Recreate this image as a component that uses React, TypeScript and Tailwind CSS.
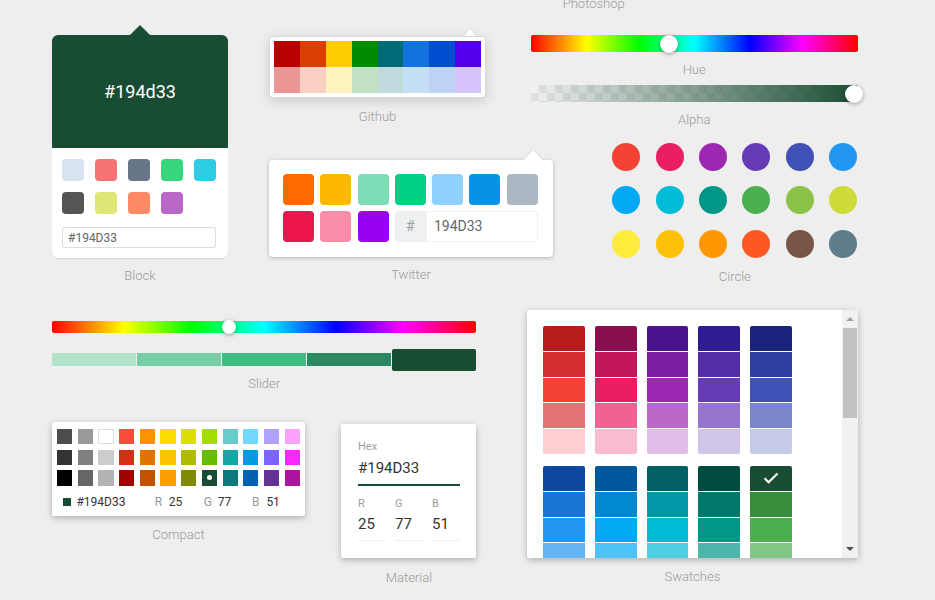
import React from "react";

const blockColors = ["#D9E3F0", "#F47373", "#697689", "#37D67A", "#2CCCE4", "#555555", "#dce775", "#ff8a65", "#ba68c8"];
const githubColors = [
  "#B80000", "#DB3E00", "#FCCB00", "#008B02", "#006B76", "#1273DE", "#004DCF", "#5300EB",
  "#EB9694", "#FAD0C3", "#FEF3BD", "#C1E1C5", "#BEDADC", "#C4DEF6", "#BED3F3", "#D4C4FB",
];
const twitterTop = ["#FF6900", "#FCB900", "#7BDCB5", "#00D084", "#8ED1FC", "#0693E3", "#ABB8C3"];
const twitterBottom = ["#EB144C", "#F78DA7", "#9900EF"];
const circleColors = [
  "#f44336", "#e91e63", "#9c27b0", "#673ab7", "#3f51b5", "#2196f3",
  "#03a9f4", "#00bcd4", "#009688", "#4caf50", "#8bc34a", "#cddc39",
  "#ffeb3b", "#ffc107", "#ff9800", "#ff5722", "#795548", "#607d8b",
];
const compactColors = [
  "#4D4D4D", "#999999", "#FFFFFF", "#F44E3B", "#FE9200", "#FCDC00", "#DBDF00", "#A4DD00", "#68CCCA", "#73D8FF", "#AEA1FF", "#FDA1FF",
  "#333333", "#808080", "#CCCCCC", "#D33115", "#E27300", "#FCC400", "#B0BC00", "#68BC00", "#16A5A5", "#009CE0", "#7B64FF", "#FA28FF",
  "#000000", "#666666", "#B3B3B3", "#9F0500", "#C45100", "#FB9E00", "#808900", "#194D33", "#0C797D", "#0062B1", "#653294", "#AB149E",
];
const swatchGroups = [
  ["#B71C1C", "#D32F2F", "#F44336", "#E57373", "#FFCDD2"],
  ["#880E4F", "#C2185B", "#E91E63", "#F06292", "#F8BBD0"],
  ["#4A148C", "#7B1FA2", "#9C27B0", "#BA68C8", "#E1BEE7"],
  ["#311B92", "#512DA8", "#673AB7", "#9575CD", "#D1C4E9"],
  ["#1A237E", "#303F9F", "#3F51B5", "#7986CB", "#C5CAE9"],
  ["#0D47A1", "#1976D2", "#2196F3", "#64B5F6", "#BBDEFB"],
  ["#01579B", "#0288D1", "#03A9F4", "#4FC3F7", "#B3E5FC"],
  ["#006064", "#0097A7", "#00BCD4", "#4DD0E1", "#B2EBF2"],
  ["#004D40", "#00796B", "#009688", "#4DB6AC", "#B2DFDB"],
  ["#194D33", "#388E3C", "#4CAF50", "#81C784", "#C8E6C9"],
];
const sliderShades = ["#b0e3ca", "#76cfa4", "#40bb82", "#2b8861"];

function Label({ children }: { children: React.ReactNode }) {
  return (
    <div className="relative top-[1px] text-center text-[13px] leading-[16px] font-light text-[#9b9b9b]">{children}</div>
  );
}

function Block() {
  return (
    <div className="ml-[52px] mt-[25px] w-[176px] shrink-0">
      <div className="mx-auto h-0 w-0 border-x-[10px] border-b-[10px] border-x-transparent border-b-[#194d33]" />
      <div className="rounded-[6px] bg-white shadow-[0_1px_rgba(0,0,0,0.1)]">
        <div className="flex h-[113px] items-center justify-center rounded-t-[6px] bg-[#194d33] text-[18px] text-white">#194d33</div>
        <div className="px-[10px] pt-[11px] pb-[10px]">
          <div className="flex w-[156px] flex-wrap gap-[11px]">
            {blockColors.map((c) => (
              <div key={c} className="h-[22px] w-[22px] rounded-[4px]" style={{ background: c }} />
            ))}
          </div>
          <div className="mt-[13px] flex h-[21px] w-[154px] items-center rounded-[3px] px-[6px] text-[12px] text-[#666] shadow-[inset_0_0_0_1px_#dddddd]">
            #194D33
          </div>
        </div>
      </div>
      <div className="mt-[9px]">
        <Label>Block</Label>
      </div>
    </div>
  );
}

function Github() {
  return (
    <div className="mt-[28px] w-[217px]">
      <div className="flex justify-end pr-[10px]">
        <div className="h-0 w-0 border-x-[6px] border-b-[8px] border-x-transparent border-b-white [filter:drop-shadow(0_-1px_0_rgba(0,0,0,0.12))]" />
      </div>
      <div className="h-[62px] rounded-[4px] border border-black/15 bg-white p-[4px] shadow-[0_3px_12px_rgba(0,0,0,0.15)]">
        <div className="grid grid-cols-8">
          {githubColors.map((c) => (
            <div key={c} className="h-[26px]" style={{ background: c }} />
          ))}
        </div>
      </div>
      <div className="mt-[10px]">
        <Label>Github</Label>
      </div>
    </div>
  );
}

function Twitter() {
  return (
    <div className="mt-[26px] w-[284px]">
      <div className="flex justify-end pr-[11px]">
        <div className="h-0 w-0 border-x-[9px] border-b-[10px] border-x-transparent border-b-white [filter:drop-shadow(0_-1px_1px_rgba(0,0,0,0.08))]" />
      </div>
      <div className="rounded-[4px] bg-white pt-[14px] pb-[15px] pl-[14px] shadow-[0_1px_4px_rgba(0,0,0,0.25)]">
        <div className="flex w-[256px] flex-wrap gap-[6.3px]">
          {twitterTop.map((c) => (
            <div key={c} className="h-[31px] w-[31px] rounded-[4px]" style={{ background: c }} />
          ))}
          {twitterBottom.map((c) => (
            <div key={c} className="h-[31px] w-[31px] rounded-[4px]" style={{ background: c }} />
          ))}
          <div className="flex h-[31px]">
            <div className="flex w-[31px] items-center justify-center rounded-l-[4px] bg-[#F0F0F0] text-[14px] text-[#98A1A4]">#</div>
            <div className="flex w-[112px] items-center rounded-r-[4px] pl-[8px] text-[14px] text-[#666] shadow-[inset_0_0_0_1px_#F0F0F0]">194D33</div>
          </div>
        </div>
      </div>
      <div className="mt-[9px]">
        <Label>Twitter</Label>
      </div>
    </div>
  );
}

function RightTop() {
  return (
    <div className="-ml-[22.3px] w-[327px] shrink-0">
      <div className="-mt-[4px] ml-[32px] w-[60px] text-center text-[13px] leading-[16px] font-light text-[#9b9b9b]">Photoshop</div>
      <div className="relative mt-[23px] h-[17px] rounded-[2px] bg-[linear-gradient(to_right,#f00_0%,#ff0_17%,#0f0_33%,#0ff_50%,#00f_67%,#f0f_83%,#f00_100%)]">
        <div className="absolute top-[-0.5px] left-[129px] h-[18px] w-[18px] rounded-full bg-white shadow-[0_1px_4px_rgba(0,0,0,0.37)]" />
      </div>
      <div className="mt-[9px]">
        <Label>Hue</Label>
      </div>
      <div className="relative mt-[8px] h-[17px] rounded-[2px] [background-image:linear-gradient(to_right,rgba(25,77,51,0),#194d33),repeating-conic-gradient(#e2e2e2_0_25%,#f2f2f2_0_50%)] [background-size:100%_100%,16px_16px]">
        <div className="absolute top-[-0.5px] left-[314.3px] h-[18px] w-[18px] rounded-full bg-white shadow-[0_1px_4px_rgba(0,0,0,0.37)]" />
      </div>
      <div className="mt-[9px]">
        <Label>Alpha</Label>
      </div>
      <div className="mt-[16px] ml-[81.6px] w-[245px]">
        <div className="grid grid-cols-[repeat(6,28px)] gap-x-[15.4px] gap-y-[15.4px]">
          {circleColors.map((c) => (
            <div key={c} className="h-[28px] w-[28px] rounded-full" style={{ background: c }} />
          ))}
        </div>
        <div className="mt-[10px]">
          <Label>Circle</Label>
        </div>
      </div>
    </div>
  );
}

function Slider() {
  return (
    <div className="pt-[10.7px]">
      <div className="relative h-[12px] rounded-[2px] bg-[linear-gradient(to_right,#f00_0%,#ff0_17%,#0f0_33%,#0ff_50%,#00f_67%,#f0f_83%,#f00_100%)]">
        <div className="absolute top-[-1px] left-[169.7px] h-[14px] w-[14px] rounded-full bg-white shadow-[0_1px_4px_rgba(0,0,0,0.37)]" />
      </div>
      <div className="mt-[16px] flex h-[22px] items-center gap-[1px]">
        {sliderShades.map((c, i) => (
          <div key={c} className={i === 0 ? "h-[12.7px] flex-1 rounded-l-[2px]" : "h-[12.7px] flex-1"} style={{ background: c }} />
        ))}
        <div className="h-[22px] flex-1 rounded-[2px] bg-[#194d33]" />
      </div>
      <div className="mt-[4px]">
        <Label>Slider</Label>
      </div>
    </div>
  );
}

function Compact() {
  return (
    <div className="w-[253px] shrink-0">
      <div className="rounded-[2px] bg-white pt-[6.7px] pb-[4px] pl-[5px] shadow-[0_2px_10px_rgba(0,0,0,0.12),0_2px_5px_rgba(0,0,0,0.16)]">
        <div className="grid grid-cols-[repeat(12,15.3px)] gap-x-[5.4px] gap-y-[5.4px]">
          {compactColors.map((c) => (
            <div
              key={c}
              className={c === "#FFFFFF" ? "relative flex h-[15.3px] items-center justify-center shadow-[inset_0_0_0_1px_#dddddd]" : "relative flex h-[15.3px] items-center justify-center"}
              style={{ background: c }}
            >
              {c === "#194D33" && <div className="h-[5px] w-[5px] rounded-full bg-white" />}
            </div>
          ))}
        </div>
        <div className="mt-[6.4px] flex h-[20px] items-center text-[12px]">
          <div className="ml-[6px] h-[8.4px] w-[8.4px] bg-[#194d33]" />
          <div className="ml-[5px] w-[78.3px] text-[#333]">#194D33</div>
          <div className="w-[14px] text-[#999]">R</div>
          <div className="w-[35px] text-[#333]">25</div>
          <div className="w-[14px] text-[#999]">G</div>
          <div className="w-[34.3px] text-[#333]">77</div>
          <div className="w-[14.4px] text-[#999]">B</div>
          <div className="text-[#333]">51</div>
        </div>
      </div>
      <div className="mt-[10px]">
        <Label>Compact</Label>
      </div>
    </div>
  );
}

function Material() {
  return (
    <div className="mt-[1.7px] ml-[36.4px] w-[135px] shrink-0">
      <div className="h-[134px] rounded-[2px] bg-white pt-[16.3px] pl-[16.6px] shadow-[0_2px_10px_rgba(0,0,0,0.12),0_2px_5px_rgba(0,0,0,0.16)]">
        <div className="text-[11px] leading-[14px] text-[#9e9e9e]">Hex</div>
        <div className="mt-[3.4px] text-[15px] leading-[20px] text-[#333]">#194D33</div>
        <div className="mt-[6.3px] h-[2px] w-[102px] bg-[#194d33]" />
        <div className="mt-[11.3px] flex gap-[9px]">
          {[
            ["R", "25"],
            ["G", "77"],
            ["B", "51"],
          ].map(([l, v]) => (
            <div key={l} className="w-[28px]">
              <div className="text-[11px] leading-[14px] text-[#9e9e9e]">{l}</div>
              <div className="mt-[3px] text-[15px] leading-[20px] text-[#333]">{v}</div>
              <div className="mt-[6px] h-[1px] w-[28px] bg-[#eeeeee]" />
            </div>
          ))}
        </div>
      </div>
      <div className="mt-[10.7px]">
        <Label>Material</Label>
      </div>
    </div>
  );
}

function Swatches() {
  return (
    <div className="ml-[50.7px] w-[330.6px] shrink-0">
      <div className="flex h-[248.3px] overflow-hidden rounded-[2px] bg-white shadow-[0_2px_10px_rgba(0,0,0,0.12),0_2px_5px_rgba(0,0,0,0.16)]">
        <div className="flex-1 overflow-hidden pt-[16px] pl-[16.3px]">
          <div className="grid grid-cols-[repeat(5,41.7px)] gap-x-[10px] gap-y-[12px]">
            {swatchGroups.map((g, gi) => (
              <div key={gi} className="flex flex-col gap-[1px]">
                {g.map((c, i) => (
                  <div
                    key={c}
                    className={
                      i === 0
                        ? "flex h-[24.8px] items-center justify-center rounded-t-[2px]"
                        : i === 4
                        ? "h-[24.8px] rounded-b-[2px]"
                        : "h-[24.8px]"
                    }
                    style={{ background: c }}
                  >
                    {c === "#194D33" && (
                      <svg width="16" height="12" viewBox="0 0 16 12" fill="none">
                        <path d="M1.5 6.2 L5.6 10.2 L14.5 1.5" stroke="white" strokeWidth="2.2" />
                      </svg>
                    )}
                  </div>
                ))}
              </div>
            ))}
          </div>
        </div>
        <div className="flex w-[16px] shrink-0 flex-col items-center bg-[#f1f1f1]">
          <div className="flex h-[17.7px] w-full items-center justify-center">
            <div className="h-0 w-0 border-x-[4px] border-b-[4px] border-x-transparent border-b-[#a3a3a3]" />
          </div>
          <div className="h-[90.6px] w-[14px] bg-[#c1c1c1]" />
          <div className="flex-1" />
          <div className="flex h-[19px] w-full items-center justify-center">
            <div className="h-0 w-0 border-x-[4px] border-t-[4px] border-x-transparent border-t-[#505050]" />
          </div>
        </div>
      </div>
      <div className="mt-[9.7px]">
        <Label>Swatches</Label>
      </div>
    </div>
  );
}

export default function App() {
  return (
    <div className="h-[600px] w-[935px] overflow-hidden bg-[#eeeeee] font-['Roboto',sans-serif]">
      <div className="flex h-[310px] items-start">
        <Block />
        <div className="ml-[41px] flex w-[284px] shrink-0 flex-col">
          <Github />
          <Twitter />
        </div>
        <RightTop />
      </div>
      <div className="flex items-start">
        <div className="ml-[52px] w-[424.4px] shrink-0">
          <Slider />
          <div className="mt-[31.6px] flex items-start">
            <Compact />
            <Material />
          </div>
        </div>
        <Swatches />
      </div>
    </div>
  );
}
